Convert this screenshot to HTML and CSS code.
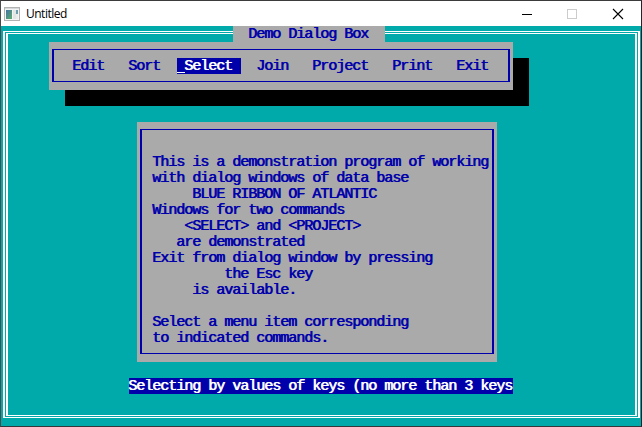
FILE: index.html
```html
<!DOCTYPE html>
<html lang="en">
<head>
<meta charset="utf-8">
<title>Untitled</title>
<link rel="stylesheet" href="styles.css">
</head>
<body>
<div class="window">
  <header class="titlebar">
    <svg class="app-icon" width="16" height="14" viewBox="0 0 16 14">
      <defs><linearGradient id="g" x1="0" y1="0" x2="1" y2="1"><stop offset="0" stop-color="#4573a5"/><stop offset="1" stop-color="#5cae6c"/></linearGradient></defs>
      <rect x=".5" y=".5" width="15" height="13" fill="#f4f4f4" stroke="#b0b2b4"/>
      <rect x="1" y="1" width="14" height="1" fill="#d5d8da"/>
      <rect x="2" y="3" width="6" height="9" fill="url(#g)"/>
      <rect x="9" y="3" width="3" height="9" fill="#e2e5e6"/>
      <rect x="12" y="3" width="2" height="4" fill="#6c9fae"/>
      <rect x="12" y="7" width="2" height="5" fill="#e9ecea"/>
    </svg>
    <span class="caption">Untitled</span>
    <svg class="controls" width="102" height="12" viewBox="0 0 102 12">
      <path d="M0 6.5h10" stroke="#000"/>
      <rect x="45.500" y="1.500" width="9" height="9" fill="none" stroke="#ccc"/>
      <path d="M91 1l10 10M101 1L91 11" stroke="#000" stroke-width="1.100"/>
    </svg>
  </header>
  <main class="screen">
    <div class="frame"></div>
    <h1 class="heading">Demo Dialog Box</h1>
    <nav class="panel menu">
      <div class="panel-border items">
        <span class="item">Edit</span>
        <span class="item">Sort</span>
        <span class="item selected">Select</span>
        <span class="item">Join</span>
        <span class="item">Project</span>
        <span class="item">Print</span>
        <span class="item">Exit</span>
      </div>
    </nav>
    <section class="panel dialog">
      <pre class="panel-border message">
This is a demonstration program of working
with dialog windows of data base
     BLUE RIBBON OF ATLANTIC
Windows for two commands
    &lt;SELECT&gt; and &lt;PROJECT&gt;
   are demonstrated
Exit from dialog window by pressing
         the Esc key
     is available.

Select a menu item corresponding
to indicated commands.</pre>
    </section>
    <p class="status">Selecting by values of keys (no more than 3 keys</p>
  </main>
</div>
</body>
</html>
```
FILE: styles.css
```css
* { box-sizing: border-box; }

body { margin: 0; overflow: hidden; }

.window {
  width: 642px;
  height: 427px;
  border: 1px solid;
  border-color: #3c3a3b #24242c #35363a #4c4a4b;
}

.titlebar {
  display: flex;
  align-items: center;
  height: 25px;
  padding: 0 17px 0 3px;
  background: #fff;
}

.caption {
  flex: 1;
  margin-left: 6px;
  font: 12px/16px "Open Sans", "Noto Sans", sans-serif;
  letter-spacing: -0.5px;
  color: #000;
}

/* 80 x 25 character cells, 8 x 16 pixels each */
.screen {
  position: relative;
  display: flex;
  flex-direction: column;
  align-items: flex-start;
  height: 400px;
  background: #00aaaa;
  color: #0000aa;
  font: 15px/16px "Liberation Mono", monospace;
  letter-spacing: -1.002px;
  text-shadow: 0.7px 0 currentColor;
}

.frame,
.frame::before {
  position: absolute;
  border: solid #fff;
  border-width: 1px 2px;
}

.frame { inset: 5px 1px 8px 2px; }

.frame::before { content: ""; inset: 1px; }

.heading {
  position: relative;
  margin: 0 0 0 232px;
  padding: 1px 15px 0;
  width: 152px;
  height: 16px;
  background: #aaa;
  font: inherit;
  white-space: nowrap;
}

.panel {
  position: relative;
  background: #aaa;
  padding: 7px 3px 8px;
}

.panel-border {
  height: 100%;
  margin: 0;
  border: solid #0000aa;
  border-width: 1px 2px;
}

.menu {
  width: 464px;
  height: 48px;
  margin-left: 48px;
  box-shadow: 16px 16px 0 #000;
}

.items {
  display: flex;
  gap: 8px;
  padding: 8px 11px;
}

.item {
  flex: none;
  height: 16px;
  padding: 1px 9px 0 7px;
}

.selected {
  position: relative;
  background: #0000aa;
  color: #fff;
}

/* text cursor on the first cell of the active item */
.selected::before {
  content: "";
  position: absolute;
  left: 0;
  top: 14px;
  width: 8px;
  height: 1px;
  background: #fff;
}

.dialog {
  width: 360px;
  height: 240px;
  margin: 32px 0 0 136px;
}

.message {
  padding: 25px 0 0 10px;
  font: inherit;
}

.status {
  position: relative;
  margin: 16px 0 0 128px;
  padding-top: 1px;
  width: 384px;
  height: 16px;
  background: #0000aa;
  color: #fff;
  text-indent: -1px;
  white-space: nowrap;
}
```
